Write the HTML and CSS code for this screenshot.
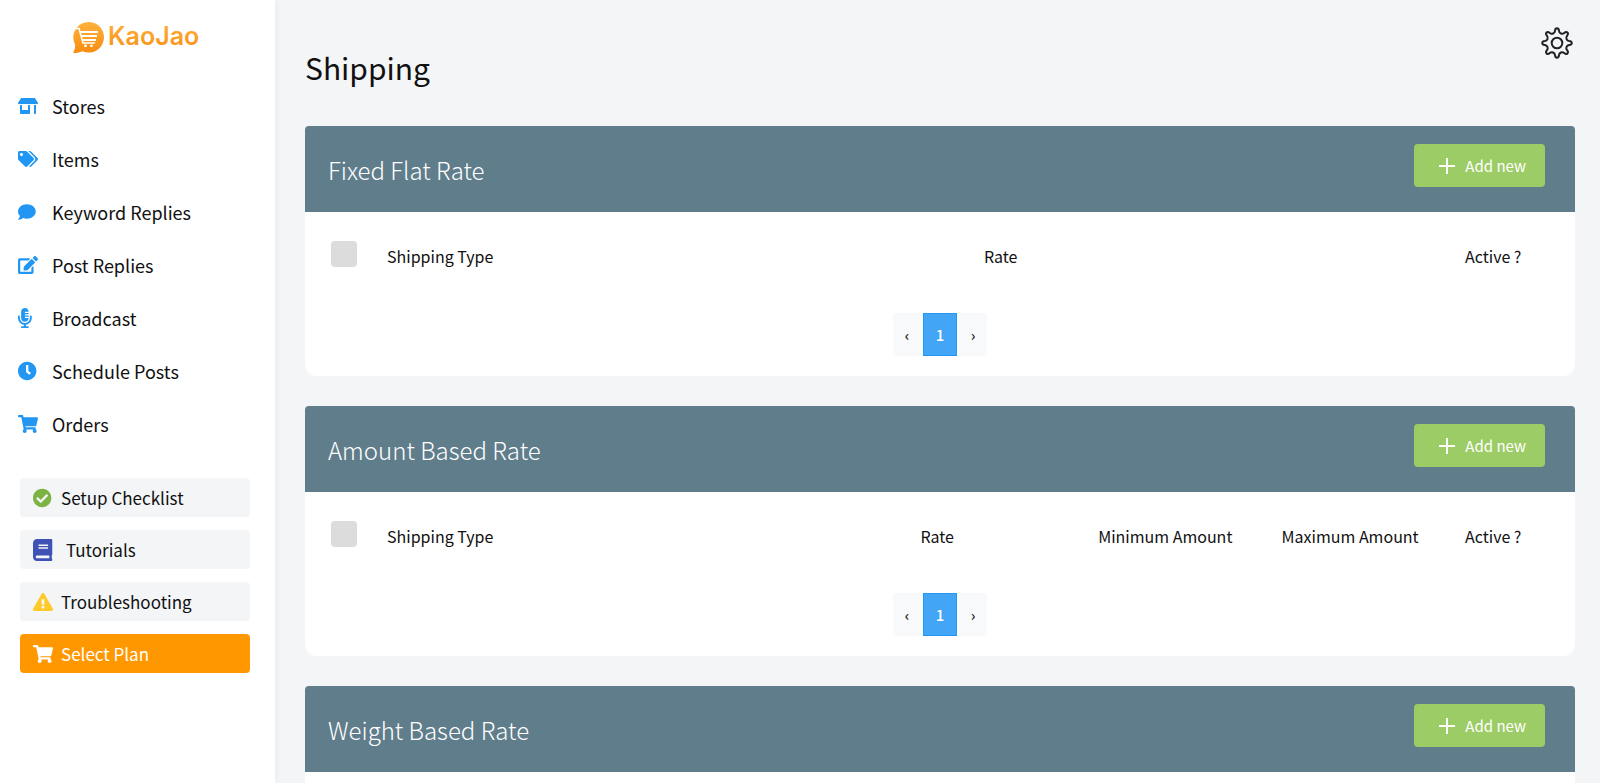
FILE: index.html
```
<!DOCTYPE html>
<html lang="en">
<head>
  <meta charset="UTF-8">
  <meta name="viewport" content="width=device-width, initial-scale=1">
  <title>KaoJao - Shipping</title>
  <link rel="stylesheet" href="styles.css">
</head>
<body>

<!-- Shared icons -->
<svg class="sprite" aria-hidden="true">
  <symbol id="icon-cart" viewBox="0 0 576 512" preserveAspectRatio="xMinYMid">
    <path d="M528.12 301.319l47.273-208C578.806 78.301 567.391 64 551.99 64H159.208l-9.166-44.81C147.758 8.021 137.93 0 126.529 0H24C10.745 0 0 10.745 0 24v16c0 13.255 10.745 24 24 24h69.883l70.248 343.435C147.325 417.1 136 435.222 136 456c0 30.928 25.072 56 56 56s56-25.072 56-56c0-15.674-6.447-29.835-16.824-40h209.647C430.447 426.165 424 440.326 424 456c0 30.928 25.072 56 56 56s56-25.072 56-56c0-22.172-12.888-41.332-31.579-50.405l5.517-24.276c3.413-15.018-8.002-29.319-23.403-29.319H218.117l-6.545-32h293.145c11.206 0 20.92-7.754 23.403-18.681z"/>
  </symbol>
  <symbol id="icon-plus" viewBox="0 0 16 16">
    <path d="M7 0h2v7h7v2H9v7H7V9H0V7h7z"/>
  </symbol>
</svg>

<div class="layout">

  <!-- Sidebar -->
  <aside class="sidebar">
    <a class="logo" href="#" aria-label="KaoJao">
      <svg width="130" height="34" viewBox="0 0 130 34">
        <defs>
          <linearGradient id="logoFill" gradientUnits="userSpaceOnUse" x1="0" y1="0" x2="0" y2="32">
            <stop offset="0" stop-color="#ffb340"/>
            <stop offset="1" stop-color="#f78c10"/>
          </linearGradient>
        </defs>
        <path fill="url(#logoFill)" d="M16 1a15.300 15.300 0 1 1-6.500 29.300C6.500 31.600 3 32.200 0 32c1.600-2.500 2.200-5.500 2.100-8.500A15.300 15.300 0 0 1 16 1z"/>
        <g fill="none" stroke="#fff" stroke-width="2">
          <path d="M1 7.500h5L10 22h12" stroke-width="1.500"/>
          <path d="M7 11h18M8.500 15h15.500M10 19h13"/>
        </g>
        <circle cx="12.500" cy="24.800" r="1.400" fill="#fff"/>
        <circle cx="18.500" cy="24.800" r="1.400" fill="#fff"/>
        <text class="logo-text" x="35" y="24" fill="url(#logoFill)">KaoJao</text>
      </svg>
    </a>

    <nav class="menu">
      <a href="#">
        <svg viewBox="0 0 640 512" preserveAspectRatio="xMinYMid"><path d="M320 384H128V224H64v256c0 17.700 14.300 32 32 32h256c17.700 0 32-14.300 32-32V224h-64v160zm314.600-241.800l-85.300-128c-6-8.900-16-14.200-26.700-14.200H117.400c-10.700 0-20.700 5.300-26.600 14.200l-85.300 128c-14.200 21.300 1 49.800 26.600 49.800H608c25.500 0 40.700-28.500 26.600-49.800zM512 496c0 8.800 7.200 16 16 16h32c8.800 0 16-7.200 16-16V224h-64v272z"/></svg>
        Stores
      </a>
      <a href="#">
        <svg viewBox="0 0 640 512" preserveAspectRatio="xMinYMid"><path d="M497.941 225.941L286.059 14.059A48 48 0 0 0 252.118 0H48C21.490 0 0 21.490 0 48v204.118a48 48 0 0 0 14.059 33.941l211.882 211.882c18.744 18.745 49.136 18.746 67.882 0l204.118-204.118c18.745-18.745 18.745-49.137 0-67.882zM112 160c-26.510 0-48-21.490-48-48s21.490-48 48-48 48 21.490 48 48-21.490 48-48 48zm513.941 133.823L421.823 497.941c-18.745 18.745-49.137 18.745-67.882 0l-.360-.360L527.640 323.522c16.999-16.999 26.360-39.600 26.360-63.640s-9.362-46.641-26.360-63.640L331.397 0h48.721a48 48 0 0 1 33.941 14.059l211.882 211.882c18.745 18.745 18.745 49.137 0 67.882z"/></svg>
        Items
      </a>
      <a href="#">
        <svg viewBox="0 0 576 512" preserveAspectRatio="xMinYMid"><path d="M256 32C114.600 32 0 125.100 0 240c0 49.600 21.400 95 57 130.700C44.500 421.100 2.700 466 2.200 466.500c-2.200 2.300-2.800 5.700-1.500 8.700S4.800 480 8 480c66.300 0 116-31.800 140.600-51.400 32.700 12.300 69 19.400 107.400 19.400 141.400 0 256-93.100 256-208S397.400 32 256 32z"/></svg>
        Keyword Replies
      </a>
      <a href="#">
        <svg viewBox="0 0 576 512" preserveAspectRatio="xMinYMid"><path d="M402.600 83.200l90.200 90.200c3.800 3.800 3.800 10 0 13.800L274.400 405.600l-92.800 10.300c-12.400 1.400-22.900-9.100-21.500-21.500l10.300-92.800L388.800 83.200c3.800-3.800 10-3.800 13.800 0zm162-22.900l-48.800-48.800c-15.200-15.200-39.900-15.200-55.200 0l-35.400 35.400c-3.800 3.800-3.800 10 0 13.800l90.200 90.200c3.800 3.800 10 3.800 13.800 0l35.400-35.400c15.200-15.300 15.200-40 0-55.200zM384 346.200V448H64V128h229.800c3.200 0 6.200-1.300 8.500-3.500l40-40c7.600-7.600 2.200-20.500-8.500-20.500H48C21.500 64 0 85.500 0 112v352c0 26.500 21.500 48 48 48h352c26.500 0 48-21.500 48-48V306.200c0-10.700-12.900-16-20.500-8.500l-40 40c-2.200 2.300-3.500 5.300-3.500 8.500z"/></svg>
        Post Replies
      </a>
      <a href="#">
        <svg viewBox="0 0 352 512" preserveAspectRatio="xMinYMid"><path d="M336 192h-16c-8.840 0-16 7.160-16 16v48c0 74.800-64.490 134.820-140.790 127.380C96.710 376.890 48 317.110 48 250.300V208c0-8.840-7.160-16-16-16H16c-8.840 0-16 7.160-16 16v40.160c0 89.640 63.970 169.550 152 181.690V464H96c-8.840 0-16 7.160-16 16v16c0 8.840 7.160 16 16 16h160c8.840 0 16-7.160 16-16v-16c0-8.840-7.160-16-16-16h-56v-33.770C285.710 418.470 352 344.900 352 256v-48c0-8.840-7.160-16-16-16zM176 352c53.020 0 96-42.980 96-96h-85.330c-5.890 0-10.670-3.580-10.670-8v-16c0-4.420 4.780-8 10.670-8H272v-32h-85.330c-5.890 0-10.670-3.580-10.670-8v-16c0-4.420 4.780-8 10.670-8H272v-32h-85.330c-5.890 0-10.670-3.580-10.670-8v-16c0-4.420 4.780-8 10.670-8H272c0-53.020-42.980-96-96-96S80 42.980 80 96v160c0 53.020 42.980 96 96 96z"/></svg>
        Broadcast
      </a>
      <a href="#">
        <svg viewBox="8 0 540 512" preserveAspectRatio="xMinYMid"><path d="M256 8C119 8 8 119 8 256s111 248 248 248 248-111 248-248S393 8 256 8zm92.490 313l-20 25a16 16 0 0 1-22.490 2.500l-67-49.720a40 40 0 0 1-15-31.230V112a16 16 0 0 1 16-16h32a16 16 0 0 1 16 16v144l58 42.500a16 16 0 0 1 2.490 22.500z"/></svg>
        Schedule Posts
      </a>
      <a href="#">
        <svg><use href="#icon-cart"/></svg>
        Orders
      </a>
    </nav>

    <div class="actions">
      <a href="#">
        <svg class="green" viewBox="8 0 540 512" preserveAspectRatio="xMinYMid"><path d="M504 256c0 136.967-111.033 248-248 248S8 392.967 8 256 119.033 8 256 8s248 111.033 248 248zM227.314 387.314l184-184c6.248-6.248 6.248-16.379 0-22.627l-22.627-22.627c-6.248-6.249-16.379-6.249-22.628 0L216 308.118l-70.059-70.059c-6.248-6.248-16.379-6.248-22.628 0l-22.627 22.627c-6.248 6.248-6.248 16.379 0 22.627l104 104c6.249 6.249 16.379 6.249 22.628.001z"/></svg>
        Setup Checklist
      </a>
      <a href="#" class="wide">
        <svg class="indigo" viewBox="0 0 448 512" preserveAspectRatio="xMinYMid"><path d="M448 360V24c0-13.300-10.700-24-24-24H96C43 0 0 43 0 96v320c0 53 43 96 96 96h328c13.300 0 24-10.700 24-24v-16c0-7.500-3.500-14.300-8.900-18.700-4.200-15.400-4.200-59.300 0-74.700 5.400-4.300 8.900-11.100 8.900-18.600zM128 134c0-3.300 2.700-6 6-6h212c3.300 0 6 2.700 6 6v20c0 3.300-2.700 6-6 6H134c-3.300 0-6-2.700-6-6v-20zm0 64c0-3.300 2.700-6 6-6h212c3.300 0 6 2.700 6 6v20c0 3.300-2.700 6-6 6H134c-3.300 0-6-2.700-6-6v-20zm253.400 250H96c-17.700 0-32-14.300-32-32 0-17.600 14.400-32 32-32h285.400c-1.900 17.100-1.900 46.900 0 64z"/></svg>
        Tutorials
      </a>
      <a href="#">
        <svg class="yellow" viewBox="0 0 576 512" preserveAspectRatio="xMinYMid"><path d="M569.517 440.013C587.975 472.007 564.806 512 527.940 512H48.054c-36.937 0-59.999-40.055-41.577-71.987L246.423 23.985c18.467-32.009 64.720-31.951 83.154 0l239.940 416.028zM288 354c-25.405 0-46 20.595-46 46s20.595 46 46 46 46-20.595 46-46-20.595-46-46-46zm-43.673-165.346l7.418 136c.347 6.364 5.609 11.346 11.982 11.346h48.546c6.373 0 11.635-4.982 11.982-11.346l7.418-136c.375-6.874-5.098-12.654-11.982-12.654h-63.383c-6.884 0-12.356 5.780-11.981 12.654z"/></svg>
        Troubleshooting
      </a>
      <a href="#" class="plan">
        <svg><use href="#icon-cart"/></svg>
        Select Plan
      </a>
    </div>
  </aside>

  <!-- Content -->
  <main class="content">
    <header class="topbar">
      <h1>Shipping</h1>
      <button type="button" class="settings" aria-label="Settings">
        <svg width="32" height="32" viewBox="0 0 32 32" fill="none" stroke="currentColor" stroke-width="2">
          <path d="M14 3.800C14.300.4 17.700.4 18 3.800 18.300 6.400 21.160 7.590 23.200 5.960 25.830 3.770 28.230 6.170 26.040 8.790 24.410 10.840 25.600 13.700 28.200 14 31.600 14.300 31.600 17.700 28.200 18 25.600 18.300 24.410 21.160 26.040 23.200 28.230 25.830 25.830 28.230 23.210 26.040 21.160 24.410 18.300 25.600 18 28.200 17.700 31.600 14.300 31.600 14 28.200 13.700 25.600 10.840 24.410 8.800 26.040 6.170 28.230 3.770 25.830 5.960 23.210 7.590 21.160 6.400 18.300 3.800 18 .4 17.700.4 14.300 3.800 14 6.400 13.700 7.590 10.840 5.960 8.800 3.770 6.170 6.170 3.770 8.790 5.960 10.840 7.590 13.700 6.400 14 3.800z"/>
          <circle cx="16" cy="16" r="5.300"/>
        </svg>
      </button>
    </header>

    <!-- Fixed flat rate -->
    <section class="card">
      <div class="card-header">
        <h2>Fixed Flat Rate</h2>
        <button type="button" class="add-btn"><svg><use href="#icon-plus"/></svg>Add new</button>
      </div>
      <table>
        <thead>
          <tr>
            <th class="col-check"><input type="checkbox" aria-label="Select all flat rates"></th>
            <th class="col-type">Shipping Type</th>
            <th>Rate</th>
            <th class="col-active">Active ?</th>
          </tr>
        </thead>
      </table>
      <div class="pagination">
        <button type="button" aria-label="Previous">‹</button>
        <button type="button" class="active">1</button>
        <button type="button" aria-label="Next">›</button>
      </div>
    </section>

    <!-- Amount based rate -->
    <section class="card">
      <div class="card-header">
        <h2>Amount Based Rate</h2>
        <button type="button" class="add-btn"><svg><use href="#icon-plus"/></svg>Add new</button>
      </div>
      <table class="ranged">
        <thead>
          <tr>
            <th class="col-check"><input type="checkbox" aria-label="Select all amount rates"></th>
            <th class="col-type">Shipping Type</th>
            <th class="col-rate">Rate</th>
            <th>Minimum Amount</th>
            <th>Maximum Amount</th>
            <th class="col-active">Active ?</th>
          </tr>
        </thead>
      </table>
      <div class="pagination">
        <button type="button" aria-label="Previous">‹</button>
        <button type="button" class="active">1</button>
        <button type="button" aria-label="Next">›</button>
      </div>
    </section>

    <!-- Weight based rate -->
    <section class="card">
      <div class="card-header">
        <h2>Weight Based Rate</h2>
        <button type="button" class="add-btn"><svg><use href="#icon-plus"/></svg>Add new</button>
      </div>
      <div class="card-body"></div>
    </section>
  </main>

</div>

</body>
</html>
```
FILE: styles.css
```
* {
  box-sizing: border-box;
}
body {
  margin: 0;
  font-family: "Noto Sans CJK SC", "Open Sans", sans-serif;
  color: #111;
  background-color: #f3f5f7;
}
a {
  color: inherit;
  text-decoration: none;
}
button {
  font-family: inherit;
  border: none;
  cursor: pointer;
}
svg {
  display: block;
  flex-shrink: 0;
}
.sprite {
  display: none;
}
.layout {
  display: flex;
  height: 100vh;
  overflow: hidden;
}

/* Sidebar */
.sidebar {
  width: 275px;
  flex-shrink: 0;
  background-color: #fff;
  box-shadow: 0 0 8px rgba(0,0,0,0.06);
}
.logo {
  display: flex;
  justify-content: center;
  padding: 21px 0 24px;
}
.logo-text {
  font-family: Inter, sans-serif;
  font-size: 25px;
  font-weight: 600;
}
.menu a {
  display: flex;
  align-items: center;
  gap: 14px;
  height: 53px;
  padding: 0 18px;
  font-size: 18px;
  line-height: 24px;
}
.menu svg {
  width: 20px;
  height: 20px;
  fill: #2196f3;
}
.actions {
  display: grid;
  gap: 13px;
  padding: 28px 25px 0 20px;
}
.actions a {
  display: flex;
  align-items: center;
  gap: 8px;
  height: 39px;
  padding: 0 13px;
  border-radius: 4px;
  font-size: 17px;
  line-height: 24px;
  background-color: #f3f5f7;
}
.actions svg {
  width: 20px;
  height: 22px;
}
.actions .wide {
  gap: 13px;
}
.actions .plan {
  color: #fff;
  fill: #fff;
  background-color: #ff9800;
}
.green {
  fill: #7cb342;
}
.indigo {
  fill: #3f51b5;
}
.yellow {
  fill: #ffca28;
}

/* Content */
.content {
  flex: 1;
  min-width: 0;
  padding: 0 25px 0 30px;
  overflow: hidden;
}
.topbar {
  display: flex;
  justify-content: space-between;
  align-items: flex-start;
  padding: 27px 2px 36px 0;
}
h1 {
  margin: 17px 0 0;
  font-size: 30px;
  font-weight: 400;
  line-height: 46px;
}
.settings {
  padding: 0;
  color: #212121;
  background: none;
}
.card {
  margin-bottom: 30px;
  border-radius: 4px 4px 12px 12px;
  background-color: #fff;
  overflow: hidden;
}
.card-header {
  display: flex;
  justify-content: space-between;
  align-items: flex-start;
  height: 86px;
  padding: 18px 30px 0 23px;
  color: #fff;
  background-color: #607d8b;
}
h2 {
  margin: 8px 0 0;
  font-size: 24px;
  font-weight: 300;
  line-height: 36px;
}
.add-btn {
  display: flex;
  align-items: center;
  gap: 10px;
  height: 43px;
  padding: 0 19px 0 25px;
  border-radius: 4px;
  font-size: 15px;
  line-height: 24px;
  color: #fff;
  background-color: #9ccc65;
}
.add-btn svg {
  width: 16px;
  height: 16px;
  fill: #fff;
}

/* Tables */
table {
  width: 100%;
  border-collapse: collapse;
  table-layout: fixed;
}
th {
  height: 88px;
  padding: 0;
  font-size: 16px;
  font-weight: 400;
  line-height: 24px;
  text-align: left;
}
.col-check {
  width: 82px;
  padding: 0 0 4px 26px;
}
.col-type {
  width: 47%;
}
.col-active {
  width: 110px;
}
.ranged .col-type {
  width: 42%;
}
.ranged .col-rate {
  width: 14%;
}
input[type="checkbox"] {
  display: block;
  appearance: none;
  width: 26px;
  height: 26px;
  margin: 0;
  border-radius: 4px;
  background-color: #dcdcdc;
}
.pagination {
  display: flex;
  justify-content: center;
  gap: 2px;
  padding: 13px 0 20px;
}
.pagination button {
  height: 43px;
  padding: 0 10px;
  min-width: 28px;
  font-size: 15px;
  font-weight: 500;
  color: #111;
  background-color: #f8f9fb;
}
.pagination button:first-child {
  border-radius: 4px 0 0 4px;
}
.pagination button:last-child {
  border-radius: 0 4px 4px 0;
}
.pagination .active {
  min-width: 34px;
  border: 1px solid #2196f3;
  color: #fff;
  background-color: #42a5f5;
}
.card-body {
  height: 164px;
}
```
